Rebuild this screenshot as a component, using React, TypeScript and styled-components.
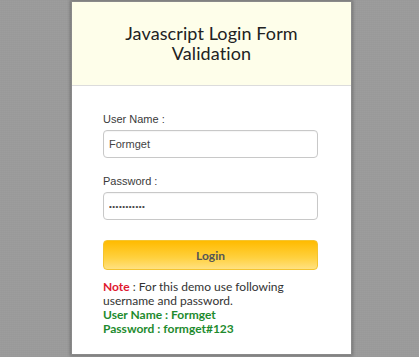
import React from 'react';
import styled, { createGlobalStyle } from 'styled-components';

const Global = createGlobalStyle`
  html, body {
    margin: 0;
    padding: 0;
  }
  body {
    background-color: #9b9b9b;
    background-image: repeating-linear-gradient(0deg, rgba(0,0,0,0.015) 0 1px, transparent 1px 2px),
      repeating-linear-gradient(90deg, rgba(255,255,255,0.015) 0 1px, transparent 1px 2px);
    height: 357px;
    overflow: hidden;
  }
`;

const App = () => {
  return (
    <Page>
      <Global />
      <Card>
        <Header>
          <Title>Javascript Login Form<br />Validation</Title>
        </Header>

        <Form onSubmit={(e) => e.preventDefault()}>
          <Label>User Name :</Label>
          <Field type="text" defaultValue="Formget" />

          <Label $top={16}>Password :</Label>
          <Field type="password" defaultValue="formget#123" />

          <LoginButton type="submit">Login</LoginButton>

          <Note>
            <Red>Note</Red> : For this demo use following<br />
            username and password.
          </Note>
          <Cred>User Name : Formget</Cred>
          <Cred>Password : formget#123</Cred>
        </Form>
      </Card>
    </Page>
  );
};

export default App;

const Page = styled.div`
  padding-top: 2px;
  padding-left: 72px;
`;

const Card = styled.div`
  width: 279px;
  height: 352px;
  background-color: white;
  box-shadow: 0 0 0 1px #8a8a8a, 0 0 3px 2px rgba(0, 0, 0, 0.25);
  box-sizing: border-box;
`;

const Header = styled.div`
  height: 83px;
  background-color: #fefeea;
  border-bottom: 1px solid #dcdcdc;
  display: flex;
  align-items: center;
  justify-content: center;
`;

const Title = styled.div`
  font-family: "Lato", "Open Sans", sans-serif;
  font-size: 18px;
  line-height: 20px;
  color: #222;
  text-align: center;
  letter-spacing: 0.1px;
  margin-top: -2px;
`;

const Form = styled.form`
  padding: 26px 33px 0 31px;
  display: flex;
  flex-direction: column;
`;

const Label = styled.label<{ $top?: number }>`
  font-family: "Liberation Sans", Arial, sans-serif;
  font-size: 11px;
  line-height: 14px;
  color: #3a3a3a;
  margin-top: ${(p) => p.$top || 0}px;
  margin-bottom: 4px;
`;

const Field = styled.input`
  width: 215px;
  height: 28px;
  box-sizing: border-box;
  border: 1px solid #c8c8c8;
  border-radius: 4px;
  padding: 0 5px;
  font-family: "Liberation Sans", Arial, sans-serif;
  font-size: 11px;
  color: #444;
  outline: none;
  box-shadow: inset 0 1px 1px rgba(0, 0, 0, 0.04);

  &[type='password'] {
    font-size: 8px;
    letter-spacing: 0.5px;
  }
`;

const LoginButton = styled.button`
  margin-top: 20px;
  width: 215px;
  height: 30px;
  border: 1px solid #f4c430;
  border-radius: 4px;
  background: linear-gradient(to bottom, #ffbb00 0%, #ffd13f 60%, #ffe181 100%);
  font-family: "Lato", "Open Sans", sans-serif;
  font-weight: 700;
  font-size: 12px;
  color: #555;
  cursor: pointer;
`;

const Note = styled.div`
  margin-top: 10px;
  font-family: "Lato", "Open Sans", sans-serif;
  font-size: 12px;
  line-height: 14px;
  color: #333;
`;

const Red = styled.span`
  color: #e0182f;
  font-weight: 700;
`;

const Cred = styled.div`
  font-family: "Lato", "Open Sans", sans-serif;
  font-size: 12px;
  line-height: 14px;
  font-weight: 700;
  color: #1e8b2e;
`;
